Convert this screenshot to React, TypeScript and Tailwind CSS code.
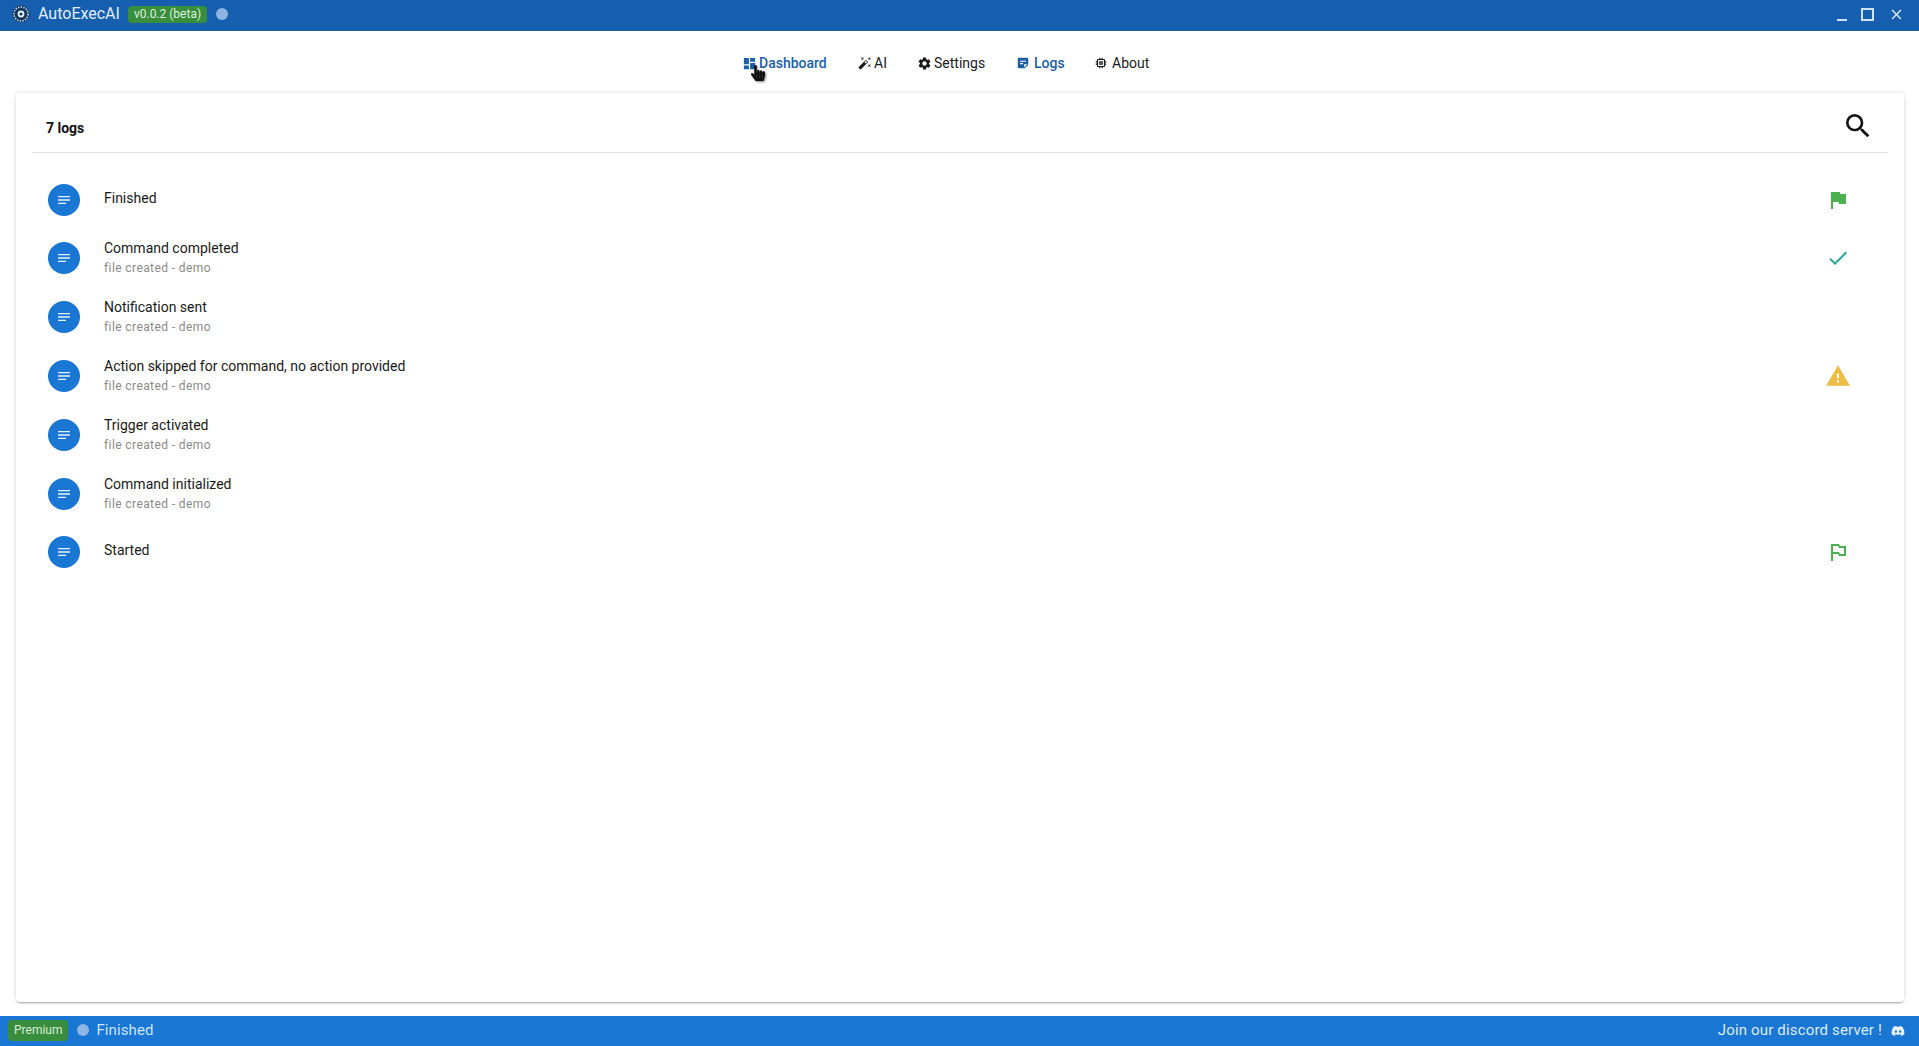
import React from "react";
import { MdDashboard, MdAutoFixHigh, MdSettings, MdStickyNote2, MdMemory, MdSearch, MdFlag, MdOutlinedFlag, MdCheck, MdWarning, MdNotes, MdClose } from "react-icons/md";
import { FaDiscord, FaHandPointer } from "react-icons/fa";

const logs = [
  { title: "Finished", icon: <MdFlag size={24} className="text-[#4caf50]" /> },
  { title: "Command completed", sub: true, icon: <MdCheck size={24} className="text-[#26a69a]" /> },
  { title: "Notification sent", sub: true },
  { title: "Action skipped for command, no action provided", sub: true, icon: <MdWarning size={26} className="text-[#edbd43]" /> },
  { title: "Trigger activated", sub: true },
  { title: "Command initialized", sub: true },
  { title: "Started", icon: <MdOutlinedFlag size={24} className="text-[#4caf50]" /> },
];

function Logo() {
  return (
    <svg width="18" height="18" viewBox="0 0 18 18" className="shrink-0">
      <circle cx="9" cy="9" r="8.5" fill="#12345c" />
      <circle cx="9" cy="9" r="7" fill="none" stroke="#cfdff0" strokeWidth="1.6" strokeDasharray="1.5 1.2" />
      <circle cx="9" cy="9" r="3.4" fill="#e6eef8" />
      <circle cx="9" cy="9" r="1.5" fill="#12345c" />
    </svg>
  );
}

function NavItem({ icon, label, active, className }: { icon: React.ReactNode; label: string; active?: boolean; className: string }) {
  return (
    <div className={`flex items-center gap-[2px] text-[14px] leading-5 ${active ? "font-medium text-[#1c5fa5]" : "text-[#1a1a1a]"} ${className}`}>
      {icon}
      <span>{label}</span>
    </div>
  );
}

export default function App() {
  return (
    <div className="flex h-[1046px] w-[1919px] flex-col overflow-hidden bg-white font-['Roboto',sans-serif]">
      <header className="flex h-[31px] shrink-0 items-center bg-[#155fae] pb-[3px] pl-[12px] pr-[14px] text-white">
        <Logo />
        <span className="ml-[8px] text-[16px] leading-[26px] text-[#e3eefa]">AutoExecAI</span>
        <span className="ml-[8px] rounded-[4px] bg-[#388e3c] px-[6px] text-[12px] leading-[17px] text-[#dff0df]">v0.0.2 (beta)</span>
        <span className="ml-[9px] h-[12px] w-[12px] rounded-full bg-[#8db4e3] blur-[0.5px]" />
        <div className="ml-auto flex items-center gap-[14px]">
          <span className="mt-[11px] h-[2px] w-[10px] bg-[#cfe3f8]" />
          <span className="h-[13px] w-[13px] border-2 border-[#cfe3f8]" />
          <MdClose size={17} className="text-[#dcebfa]" />
        </div>
      </header>

      <nav className="relative flex h-[62px] shrink-0 items-center pt-[2px] pl-[742px]">
        <NavItem active className="w-[116px]" label="Dashboard" icon={<MdDashboard size={15} className="text-[#1c5fa5]" />} />
        <NavItem className="w-[59px]" label="AI" icon={<MdAutoFixHigh size={14} />} />
        <NavItem className="w-[99px]" label="Settings" icon={<MdSettings size={15} />} />
        <NavItem active className="w-[78px]" label="Logs" icon={<MdStickyNote2 size={14} className="mr-[2px] text-[#1c5fa5]" />} />
        <NavItem className="" label="About" icon={<MdMemory size={14} className="mr-[2px]" />} />
        <div className="absolute left-[750px] top-[34px] h-[17px] w-[16px]">
          <FaHandPointer size={16} className="text-[#111] drop-shadow-[1px_1px_1px_rgba(0,0,0,0.5)]" />
        </div>
      </nav>

      <main className="ml-[16px] mr-[15px] flex h-[909px] shrink-0 flex-col rounded-[4px] bg-white px-[16px] shadow-[0_2px_2px_-1px_rgba(0,0,0,0.3),0_0_5px_rgba(0,0,0,0.14)]">
        <div className="flex h-[60px] shrink-0 items-center justify-between border-b border-[#e0e0e0] pl-[14px] pr-[14px]">
          <span className="mt-[10px] text-[14px] font-bold leading-5 text-[#111]">7 logs</span>
          <MdSearch size={32} className="mt-[6px] text-[#111]" />
        </div>
        <ul className="flex flex-col pt-[18px]">
          {logs.map((l, i) => (
            <li key={l.title} className={`flex items-center pl-[16px] pr-[37px] ${i === 0 || i === 6 ? "h-[57px]" : "h-[59px]"}`}>
              <span className="flex h-[32px] w-[32px] shrink-0 items-center justify-center rounded-full bg-[#1976d2]">
                <MdNotes size={16} className="text-[#e8f2fc]" />
              </span>
              <div className={`ml-[24px] flex min-w-0 flex-1 flex-col ${l.sub ? "" : "-mt-[4px]"}`}>
                <span className="text-[14px] leading-[20px] text-[#1a1a1a]">{l.title}</span>
                {l.sub && <span className="mt-[1px] text-[12px] leading-[18px] tracking-[0.4px] text-[#8a8a8a]">file created - demo</span>}
              </div>
              <span className="flex w-[26px] justify-center">{l.icon}</span>
            </li>
          ))}
        </ul>
      </main>

      <footer className="mt-[14px] flex h-[30px] shrink-0 items-center bg-[#1976d2] pb-[1px] pl-[8px] pr-[14px]">
        <span className="rounded-[4px] bg-[#388e3c] px-[6px] text-[12px] leading-[21px] text-[#d9ecd9]">Premium</span>
        <span className="ml-[9px] -mt-[2px] h-[12px] w-[12px] rounded-full bg-[#8db4e3] blur-[0.5px]" />
        <span className="ml-[7px] text-[15px] tracking-[0.1px] text-[#cfe3f8]">Finished</span>
        <span className="ml-auto text-[15px] tracking-[0.16px] text-[#dcebfa]">Join our discord server !</span>
        <FaDiscord size={14} className="ml-[9px] text-[#eaf3fc]" />
      </footer>
    </div>
  );
}
